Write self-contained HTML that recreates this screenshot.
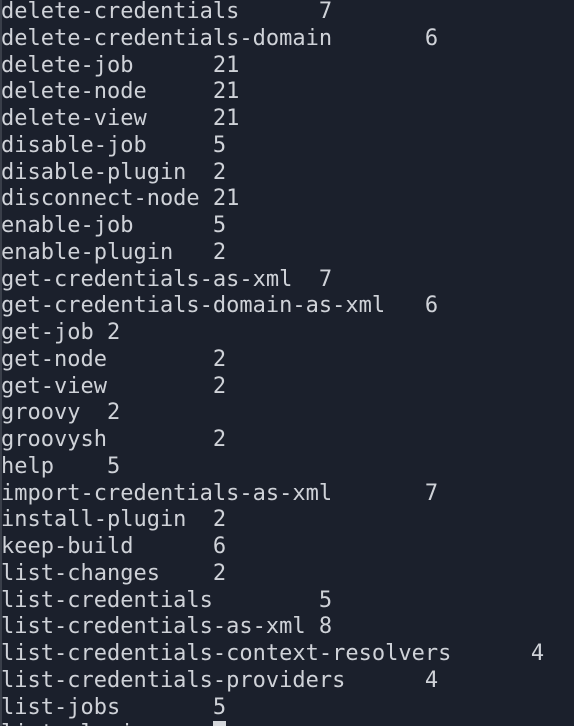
<!DOCTYPE html>
<html><head><meta charset="utf-8"><style>
html,body{margin:0;padding:0;background:#1b202c;width:574px;height:726px;overflow:hidden}
#wrap{position:relative;width:574px;height:726px;overflow:hidden;border-left:2px solid #3a3f4a;box-sizing:border-box}
pre{margin:0;position:absolute;left:-1px;top:-1px;font-family:"DejaVu Sans Mono","Liberation Mono",monospace;font-size:22px;line-height:26.75px;color:#cfd2d8;tab-size:8;-moz-tab-size:8;white-space:pre}
.cur{background:#d2d5da;color:#1b202c}
</style></head><body><div id="wrap"><pre>delete-credentials	7
delete-credentials-domain	6
delete-job	21
delete-node	21
delete-view	21
disable-job	5
disable-plugin	2
disconnect-node	21
enable-job	5
enable-plugin	2
get-credentials-as-xml	7
get-credentials-domain-as-xml	6
get-job	2
get-node	2
get-view	2
groovy	2
groovysh	2
help	5
import-credentials-as-xml	7
install-plugin	2
keep-build	6
list-changes	2
list-credentials	5
list-credentials-as-xml	8
list-credentials-context-resolvers	4
list-credentials-providers	4
list-jobs	5
list-plugins	<span class="cur"> </span></pre></div></body></html>
